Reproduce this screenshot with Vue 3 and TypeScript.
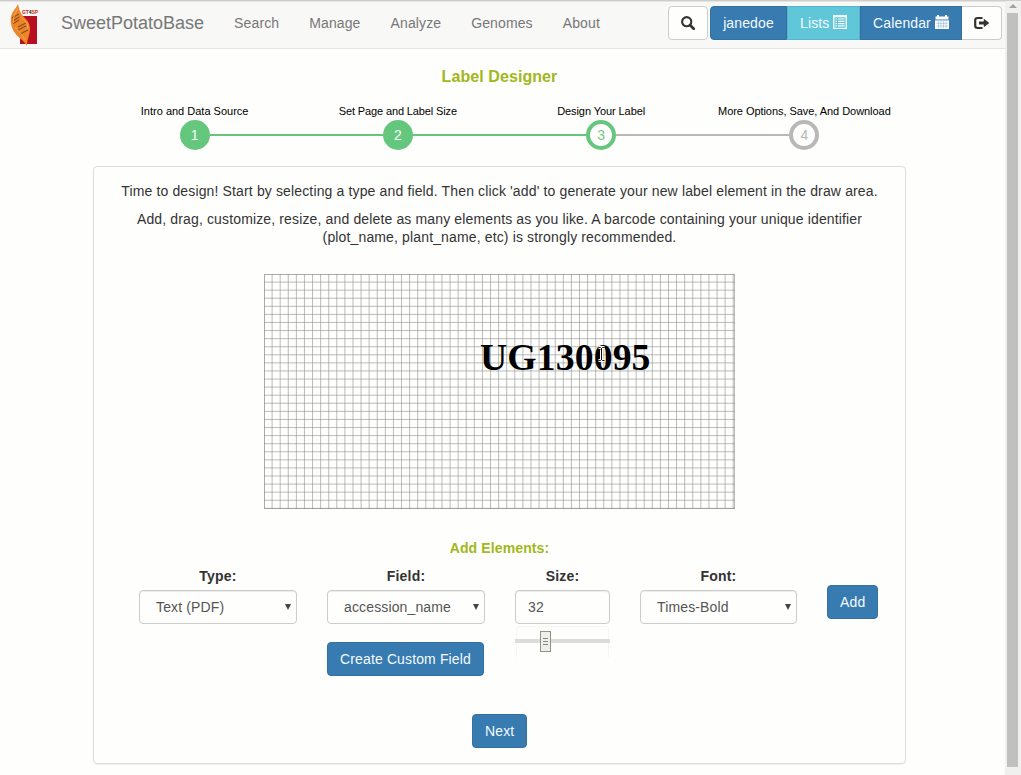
<script setup lang="ts">
import { ref } from 'vue'

interface Step {
  label: string
  state: 'done' | 'active' | 'todo'
}

const links: string[] = ['Search', 'Manage', 'Analyze', 'Genomes', 'About']

const steps: Step[] = [
  { label: 'Intro and Data Source', state: 'done' },
  { label: 'Set Page and Label Size', state: 'done' },
  { label: 'Design Your Label', state: 'active' },
  { label: 'More Options, Save, And Download', state: 'todo' },
]

const columns: number[] = Array.from({ length: 59 }, (_, i) => i * 8.09)
const rows: number[] = Array.from({ length: 30 }, (_, i) => i * 8.08)

const size = ref(32)
</script>

<template>
  <div class="window">
    <div class="page">
      <header class="navbar">
        <svg class="logo" width="40" height="43" viewBox="0 0 40 43">
          <rect x="15" y="12" width="17" height="28" fill="#b80f20" />
          <path d="M13 0C14 5 15 9 18 12C22 16 25 19 25 25C25 31 22 35 22 42C19 36 13 34 10 29C7 25 5 19 6 13C7 7 11 5 13 0Z" fill="#ec8428" />
          <path d="M7 14l7-4M7.500 17l7-4M8 19.500l6-3.500M13 23l8-4M13 26l8-4M15 30l8-4" stroke="#8d4a1c" stroke-width="1.100" fill="none" />
          <path d="M12.500 4c-2 6-5 9-4 15M16 13c4 4 7 6 7 12M10 23c3 4 8 8 10 13" stroke="#f6a653" stroke-width="1" fill="none" />
          <text x="17" y="9.500" font-family="Liberation Sans, sans-serif" font-size="5" font-weight="bold" textLength="16"><tspan fill="#c52018">GT</tspan><tspan fill="#222">4</tspan><tspan fill="#c83a14">SP</tspan></text>
        </svg>
        <a class="brand">SweetPotatoBase</a>
        <nav class="links">
          <a v-for="link in links" :key="link">{{ link }}</a>
        </nav>
        <div class="tools">
          <button class="btn plain search" aria-label="Search">
            <svg width="14" height="14" viewBox="0 0 14 14" fill="none" stroke="#333">
              <circle cx="5.700" cy="5.700" r="4.600" stroke-width="2.100" />
              <path d="M9 9l3.700 3.700" stroke-width="2.700" stroke-linecap="round" />
            </svg>
          </button>
          <div class="group">
            <button class="btn primary user">janedoe</button>
            <button class="btn info lists">
              Lists
              <svg width="14" height="14" viewBox="0 0 14 14" fill="none" stroke="#f4fcfd">
                <path d="M.7.5h12.600v13H.7z" stroke-width="1.400" />
                <path d="M.5 1.200h13" stroke-width="2.200" />
                <path d="M2.500 4h1.500M5 4h6.500M2.500 6.300h1.500M5 6.300h6.500M2.500 8.600h1.500M5 8.600h6.500M2.500 10.900h1.500M5 10.900h6.500" stroke-width="1.200" />
              </svg>
            </button>
            <button class="btn primary calendar">
              Calendar
              <svg width="14" height="14" viewBox="0 0 14 14">
                <path d="M.5 1.500H2V0h2v1.500h6V0h2v1.500h1.500V4.500H.5z" fill="#fff" />
                <path d="M0 5.400h14V14H0z" fill="#fff" />
                <path d="M1.200 8.300h11.600M1.200 11h11.600M3.500 6.200v7M6 6.200v7M8.500 6.200v7M11 6.200v7" stroke="#8fb6d6" stroke-width=".6" />
              </svg>
            </button>
            <button class="btn plain logout" aria-label="Log out">
              <svg width="16" height="14" viewBox="0 0 16 14">
                <path d="M8.500 2H3.500Q1.200 2 1.200 4.200v5.600Q1.200 12 3.500 12h5" fill="none" stroke="#333" stroke-width="2.200" />
                <path d="M5 5.600h4.800V2.800L15.300 7l-5.500 4.200V8.400H5z" fill="#333" />
              </svg>
            </button>
          </div>
        </div>
      </header>

      <main>
        <h1>Label Designer</h1>
        <ol class="steps">
          <li v-for="(step, i) in steps" :key="step.label" :class="step.state">
            <span class="step-label">{{ step.label }}</span>
            <div class="track"><span class="dot">{{ i + 1 }}</span></div>
          </li>
        </ol>

        <section class="panel">
          <p>Time to design! Start by selecting a type and field. Then click 'add' to generate your new label element in the draw area.</p>
          <p class="second">Add, drag, customize, resize, and delete as many elements as you like. A barcode containing your unique identifier<br>(plot_name, plant_name, etc) is strongly recommended.</p>

          <svg class="canvas" width="471" height="235" viewBox="0 0 471 235">
            <g stroke="#808080" stroke-opacity=".52">
              <line v-for="x in columns" :key="'c' + x" :x1="x" :x2="x" y1="0" y2="235" />
              <line v-for="y in rows" :key="'r' + y" x1="0" x2="471" :y1="y" :y2="y" />
              <rect x=".5" y=".5" width="470" height="234" fill="none" />
            </g>
            <text x="216" y="96" class="element">UG130095</text>
            <g fill="none">
              <path d="M334.500 73.500h2l1 1 1-1h2M337.500 74v12M334.500 86.500h2l1-1 1 1h2" stroke="#fff" stroke-width="3" />
              <path d="M334.500 73.500h2l1 1 1-1h2M337.500 74v12M334.500 86.500h2l1-1 1 1h2" stroke="#111" stroke-width="1" />
            </g>
          </svg>

          <h2>Add Elements:</h2>
          <div class="form">
            <div class="field">
              <label>Type:</label>
              <div class="control select"><span>Text (PDF)</span><i></i></div>
            </div>
            <div class="field">
              <label>Field:</label>
              <div class="control select"><span>accession_name</span><i></i></div>
              <button class="btn primary custom">Create Custom Field</button>
            </div>
            <div class="field">
              <label>Size:</label>
              <div class="control">{{ size }}</div>
              <div class="slider">
                <svg width="95" height="31" viewBox="0 0 95 31">
                  <path d="M1.500 31V3Q1.500 .5 4 .5h87Q93.500 .5 93.500 3v28" fill="none" stroke="#f5f5f4" />
                  <rect y="13" width="95" height="4" fill="#dcdcdb" />
                  <rect x="25.500" y="5.500" width="10" height="20" fill="#efefe9" stroke="#92928b" />
                  <path d="M28 12.500h5M28 15.500h5M28 18.500h5" stroke="#888882" />
                </svg>
              </div>
            </div>
            <div class="field">
              <label>Font:</label>
              <div class="control select"><span>Times-Bold</span><i></i></div>
            </div>
            <button class="btn primary add">Add</button>
          </div>
          <button class="btn primary next">Next</button>
        </section>
      </main>
    </div>
    <aside class="scrollbar">
      <span class="arrow"></span>
      <span class="thumb"></span>
    </aside>
  </div>
</template>

<style>
html, body { margin: 0; overflow: hidden; background: #fefefd; }
</style>

<style scoped>
* { box-sizing: border-box; }
.window {
  display: flex;
  width: 1021px;
  height: 775px;
  overflow: hidden;
  border-top: 1px solid #cdcdcc;
  background: #fefefd;
  color: #333;
  font: 14px/20px "Liberation Sans", Arial, sans-serif;
}
.page { width: 1005px; }
.navbar {
  display: flex;
  align-items: center;
  height: 48px;
  padding: 0 3px 4px 5px;
  background: #f8f8f7;
  border-top: 1px solid #e4e4e3;
  border-bottom: 1px solid #e5e5e4;
  color: #777;
}
.logo { align-self: flex-start; margin-top: 2px; flex: none; }
.brand { margin-left: 16px; font-size: 18px; }
.links { display: flex; gap: 30px; margin-left: 30px; letter-spacing: .12px; }
.tools { display: flex; gap: 2px; margin-left: auto; }
.group { display: flex; }
.btn {
  height: 34px;
  padding: 0 12px;
  border: 1px solid #336f9f;
  border-radius: 4px;
  background: #377bb1;
  color: #f5faff;
  font: 14px/20px "Liberation Sans", Arial, sans-serif;
  letter-spacing: .13px;
  white-space: nowrap;
}
.plain { padding: 0; background: #fefefd; border-color: #ccc; width: 40px; }
.btn svg { vertical-align: -1px; }
.plain svg { display: block; margin: 0 auto; }
.info { background: #60c7d8; border-color: #55b5cc; }
.group .btn { border-radius: 0; }
.group .user { width: 77px; border-radius: 4px 0 0 4px; }
.group .lists { width: 73px; }
.group .calendar { width: 102px; }
.group .logout { border-left: 0; border-radius: 0 4px 4px 0; }

main { padding: 0 99px 0 93px; }
h1 { margin: 18px 0 0; font-size: 16px; line-height: 20px; letter-spacing: .08px; text-align: center; color: #a0b81b; }
.steps { display: flex; margin: 15px 0 0; padding: 0; list-style: none; }
.steps li { flex: 1; text-align: center; }
.step-label { display: block; font-size: 11px; line-height: 18px; letter-spacing: -.05px; color: #000; }
.steps li:nth-child(1) .step-label { letter-spacing: 0; }
.steps li:nth-child(2) .step-label { letter-spacing: -.13px; }
.steps li:nth-child(3) .step-label { letter-spacing: -.08px; }
.track { display: flex; align-items: center; height: 30px; }
.track::before, .track::after { content: ""; flex: 1; height: 2px; background: #66c47f; }
.steps li:first-child .track::before, .steps li:last-child .track::after { background: none; }
.active .track::after, .todo .track::before { background: #b8b8b8; }
.dot {
  width: 30px;
  height: 30px;
  border: 4px solid #65c67e;
  border-radius: 50%;
  line-height: 22px;
  background: #65c67e;
  color: #f5fff7;
}
.active .dot { background: #fefefd; color: #75c98a; }
.todo .dot { background: #fefefd; border-color: #b8b8b8; color: #b8b8b8; }

.panel {
  display: flex;
  flex-direction: column;
  align-items: center;
  height: 598px;
  margin-top: 16px;
  padding-top: 14px;
  border: 1px solid #dcdcdb;
  border-radius: 4px;
  box-shadow: 0 1px 1px rgba(0, 0, 0, .05);
}
p { margin: 0; text-align: center; letter-spacing: .142px; white-space: nowrap; }
.second { margin-top: 9px; line-height: 18px; }
.canvas { display: block; margin-top: 28px; }
.element { font: bold 37.700px "Liberation Serif", "Times New Roman", serif; letter-spacing: .12px; fill: #000; }
h2 { margin: 29px 0 0; font-size: 14px; line-height: 20px; letter-spacing: .12px; color: #a0b81b; }
.form {
  display: grid;
  grid-template-columns: 158px 158px 95px 157px 51px;
  gap: 30px;
  align-self: flex-start;
  margin: 8px 0 0 45px;
  height: 110px;
}
label { display: block; margin-bottom: 4px; font-weight: bold; letter-spacing: .2px; text-align: center; }
.control {
  display: flex;
  align-items: center;
  height: 34px;
  padding: 0 12px;
  border: 1px solid #ccc;
  border-radius: 4px;
  color: #555;
  letter-spacing: .14px;
  box-shadow: inset 0 1px 1px rgba(0, 0, 0, .075);
}
.select { justify-content: space-between; padding: 0 5px 0 16px; }
.select i { border: solid transparent; border-width: 6px 3px 0; border-top-color: #444; }
.custom { width: 157px; margin-top: 18px; }
.slider { height: 31px; margin-top: 2px; }
.slider svg { display: block; }
.add { margin-top: 19px; }
.next { width: 55px; margin-top: 38px; }

.scrollbar {
  display: flex;
  flex-direction: column;
  width: 16px;
  padding: 3px 3px 0 2px;
  background: #f0f0ef;
}
.arrow { margin: 0 auto; border: solid transparent; border-width: 0 4px 4px; border-bottom-color: #a2a2a1; }
.thumb { height: 754px; margin-top: 5px; background: #c0c0bf; flex: none; }
</style>
